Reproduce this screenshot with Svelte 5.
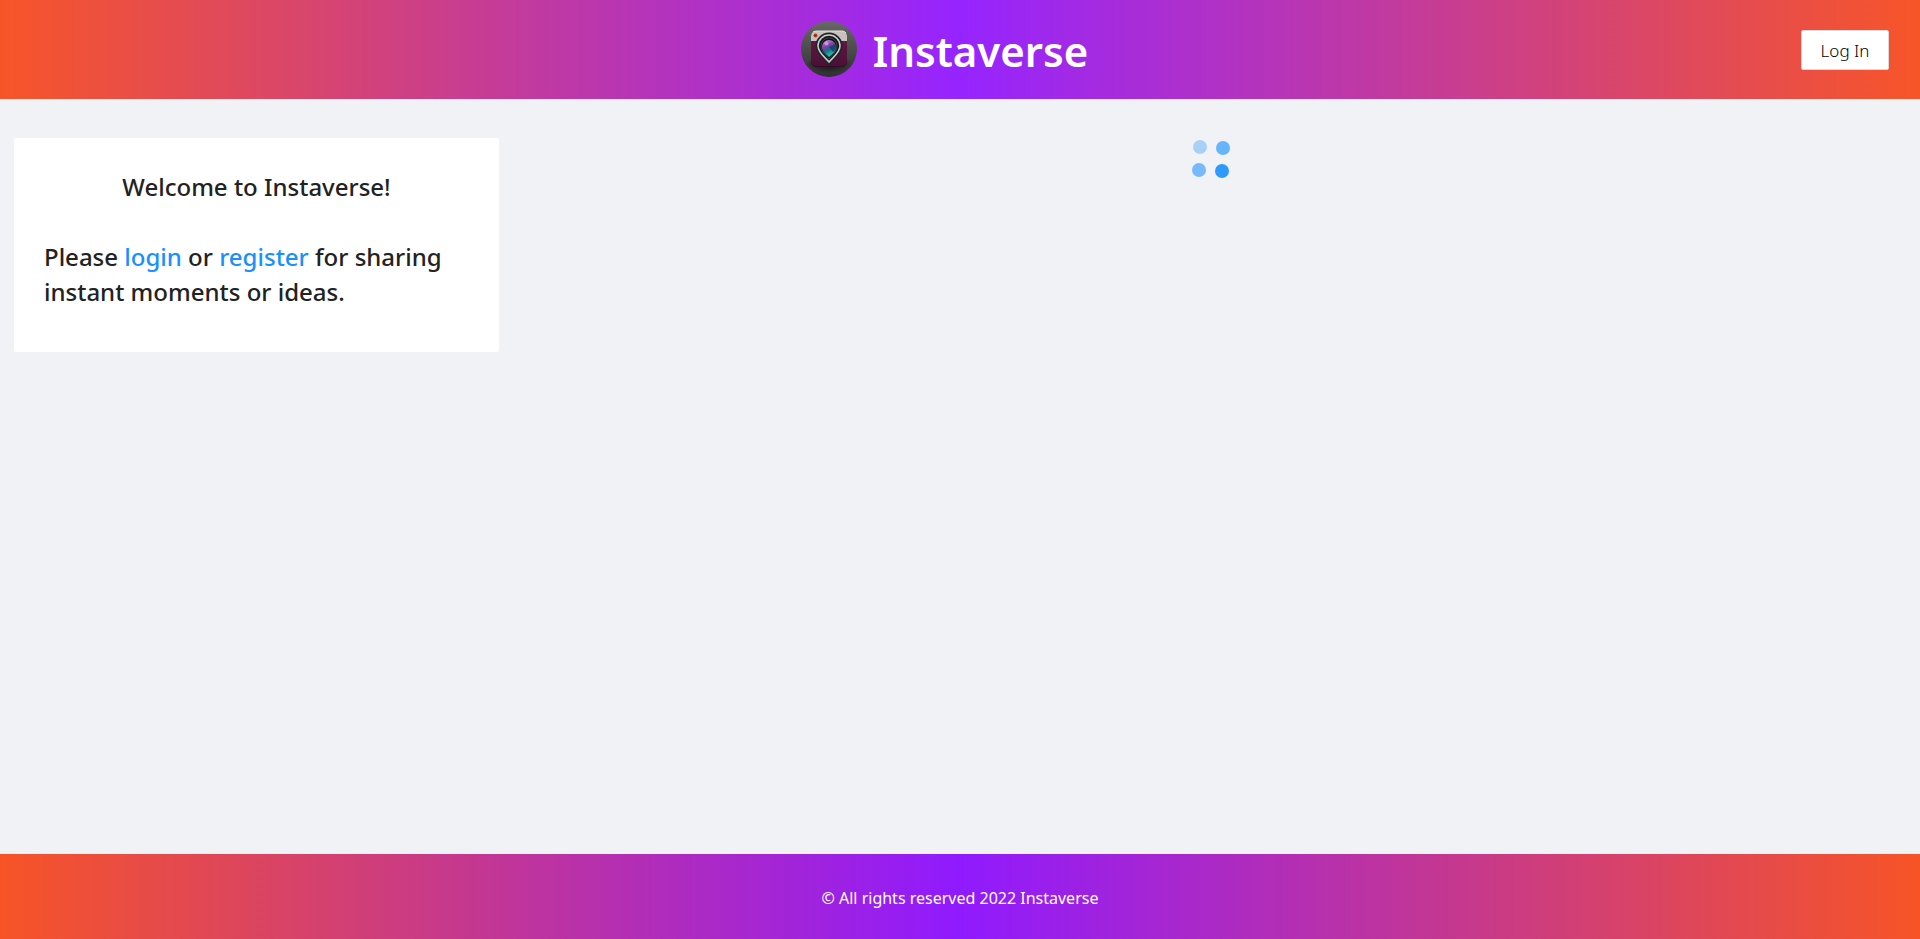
<script>
  const year = 2022;
  const dots = [
    { x: 8, y: 7, opacity: 0.33 },
    { x: 31, y: 8, opacity: 0.63 },
    { x: 7, y: 30, opacity: 0.57 },
    { x: 30, y: 31, opacity: 0.9 }
  ];
</script>

<div class="page">
  <header class="bar">
    <div class="brand">
      <svg class="logo" viewBox="0 0 56 56" aria-hidden="true">
        <defs>
          <linearGradient id="disc" x1="0" y1="0" x2="0" y2="1">
            <stop offset="0" stop-color="#686868" />
            <stop offset="1" stop-color="#303030" />
          </linearGradient>
          <linearGradient id="body" x1="0" y1="0" x2="0" y2="1">
            <stop offset="0" stop-color="#671c49" />
            <stop offset="1" stop-color="#4a1035" />
          </linearGradient>
          <linearGradient id="iris" x1="0.2" y1="0" x2="0.6" y2="1">
            <stop offset="0" stop-color="#bd9bd5" />
            <stop offset="0.35" stop-color="#8b3cac" />
            <stop offset="0.6" stop-color="#176f84" />
            <stop offset="1" stop-color="#20d9c0" />
          </linearGradient>
          <radialGradient id="shade">
            <stop offset="0.4" stop-color="#151515" stop-opacity="0.7" />
            <stop offset="1" stop-color="#151515" stop-opacity="0" />
          </radialGradient>
        </defs>
        <circle cx="28" cy="28" r="28" fill="url(#disc)" />
        <ellipse cx="28" cy="43" rx="23" ry="9" fill="url(#shade)" />
        <rect x="10" y="11" width="36" height="35" rx="5" fill="#300b23" />
        <rect x="10" y="10" width="36" height="35" rx="5" fill="url(#body)" />
        <path d="M10 20v-5a5 5 0 0 1 5-5h26a5 5 0 0 1 5 5v5z" fill="#c6c2bf" />
        <path d="M12 11q2-1 4-1h25q3 0 4 2" fill="none" stroke="#e3dfdc" />
        <circle cx="14.5" cy="14.5" r="2" fill="#a83d28" />
        <circle cx="14.5" cy="14.5" r="0.8" fill="#5a2923" />
        <path d="M28 42c-3-4-12-9-12-17a12 12 0 0 1 24 0c0 8-9 13-12 17z" fill="#151619" stroke="#262329" stroke-width="3" />
        <path d="M28 41c-3-4-11-9-11-16a11 11 0 0 1 22 0c0 7-8 12-11 16z" fill="#17181c" stroke="#c8d1d2" stroke-width="1.5" />
        <path d="M28 38c-2-3-8-7-8-13a8 8 0 0 1 16 0c0 6-6 10-8 13z" fill="#101318" stroke="#3b4147" />
        <path d="M28 36c-2-2-7-5-7-10a7 7 0 0 1 14 0c0 5-5 8-7 10z" fill="url(#iris)" />
        <path d="M28 26l6-3q2 5-2 8z" fill="#173c68" opacity="0.8" />
        <circle cx="25.5" cy="22.5" r="2" fill="#c4b6db" opacity="0.7" />
      </svg>
      <h1>Instaverse</h1>
    </div>
    <button class="login" type="button">Log In</button>
  </header>

  <main>
    <section class="card">
      <h2 class="welcome">Welcome to Instaverse!</h2>
      <p>Please <a href="#login">login</a> or <a href="#register">register</a> for sharing instant moments or ideas.</p>
    </section>
    <div class="feed" role="status" aria-label="Loading">
      <svg class="spinner" viewBox="0 0 38 38" aria-hidden="true">
        {#each dots as dot}
          <circle cx={dot.x} cy={dot.y} r="7" fill="#1890ff" fill-opacity={dot.opacity} />
        {/each}
      </svg>
    </div>
  </main>

  <footer>© All rights reserved {year} Instaverse</footer>
</div>

<style>
  :global(body) {
    margin: 0;
  }

  .page {
    display: flex;
    flex-direction: column;
    min-height: 100vh;
    background: #f0f2f5;
    color: #222;
    font-family: "Segoe UI", "Noto Sans", "Open Sans", sans-serif;
  }

  .bar {
    display: grid;
    grid-template-columns: 1fr auto 1fr;
    align-items: center;
    min-height: 99px;
    padding-right: 31px;
    background: linear-gradient(90deg, #f75528, #9624ff, #f75528);
  }

  .brand {
    grid-column: 2;
    display: flex;
    align-items: center;
    gap: 16px;
    padding-bottom: 1px;
  }

  .logo {
    width: 56px;
    height: 56px;
  }

  h1 {
    margin: 0;
    padding-top: 4px;
    color: #fff;
    font-size: 42px;
    font-weight: 600;
    line-height: 60px;
  }

  .login {
    justify-self: end;
    width: 88px;
    height: 40px;
    padding: 2px 0 0;
    border: 1px solid #d9d9d9;
    border-radius: 2px;
    background: #fff;
    color: #000;
    font-family: inherit;
    font-size: 17px;
    font-weight: 300;
  }

  main {
    flex: 1;
    display: grid;
    grid-template-columns: 485fr 1391fr;
    align-items: start;
    gap: 16px;
    padding: 39px 14px;
  }

  .card {
    padding: 31px 30px;
    border-radius: 2px;
    background: #fff;
  }

  .card h2,
  .card p {
    margin: 0;
    font-size: 24px;
    font-weight: 500;
    line-height: 35px;
  }

  .card .welcome {
    margin-bottom: 35px;
    text-align: center;
  }

  .card p {
    margin-bottom: 12px;
  }

  a {
    color: #1890ff;
    text-decoration: none;
  }

  .feed {
    display: flex;
    justify-content: center;
  }

  .spinner {
    width: 38px;
    height: 38px;
    margin-top: 2px;
  }

  footer {
    padding: 32px 16px 28px;
    background: linear-gradient(90deg, #f75426, #901aff, #f75426);
    color: #fff;
    font-size: 16px;
    line-height: 25px;
    text-align: center;
  }
</style>
